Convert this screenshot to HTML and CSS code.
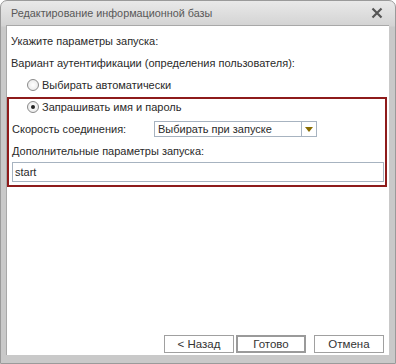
FILE: index.html
```html
<!DOCTYPE html>
<html lang="ru">
<head>
  <meta charset="UTF-8" />
  <title>Редактирование информационной базы</title>
  <link rel="stylesheet" href="styles.css">
</head>
<body>
  <div class="window">
    <div class="titlebar">
      <span class="title">Редактирование информационной базы</span>
      <svg class="close" width="12" height="12" viewBox="0 0 12 12">
        <path d="M1.5 1.5 L10.5 10.5 M10.5 1.5 L1.5 10.5" stroke="#555" stroke-width="2.2" fill="none"/>
      </svg>
    </div>

    <div class="client">
      <div class="form">
        <p class="line">Укажите параметры запуска:</p>
        <p class="line">Вариант аутентификации (определения пользователя):</p>
        <label class="radio"><span class="circle"></span>Выбирать автоматически</label>

        <div class="group">
          <label class="radio"><span class="circle checked"></span>Запрашивать имя и пароль</label>
          <div class="field-row">
            <span class="field-label">Скорость соединения:</span>
            <div class="select">
              <span class="select-value">Выбирать при запуске</span>
              <span class="select-btn"><span class="arrow"></span></span>
            </div>
          </div>
          <p class="line">Дополнительные параметры запуска:</p>
          <div class="input">start</div>
        </div>
      </div>

      <div class="buttons">
        <button class="btn">&lt; Назад</button>
        <button class="btn default">Готово</button>
        <button class="btn cancel">Отмена</button>
      </div>
    </div>
  </div>
</body>
</html>
```

FILE: styles.css
```css
:root {
  --frame: #c9c9c9;
  --frame-dark: #8c8c8c;
  --text: #2a2a2a;
  --accent: #8e1b1b;
  --field-border: #a7b3c0;
}
body {
  margin: 0;
  font-family: 'Liberation Sans', Arial, sans-serif;
  font-size: 11px;
  color: var(--text);
  background: #fff;
}
.window {
  width: 396px;
  height: 364px;
  box-sizing: border-box;
  display: flex;
  flex-direction: column;
  background: linear-gradient(#e9e9e9, #d3d3d3 25px, var(--frame) 26px);
  border: 1px solid #9a9a9a;
  border-radius: 7px 7px 0 0;
  padding: 0 6px 8px 5px;
}
.titlebar {
  height: 24px;
  display: flex;
  align-items: center;
  justify-content: space-between;
  padding: 0 6px 0 5px;
}
.title {
  color: #585858;
  font-size: 10.8px;
}
.close { display: block; }
.client {
  flex: 1;
  display: flex;
  flex-direction: column;
  justify-content: space-between;
  background: #fff;
  border: 1px solid #a8a8a8;
  border-width: 1px 0 0 1px;
}
.form { padding-top: 7px; }
.line {
  margin: 0 0 6px;
  padding-left: 4px;
  line-height: 16px;
}
.radio {
  display: flex;
  align-items: center;
  height: 16px;
  padding-left: 20px;
  margin-bottom: 4px;
}
.circle {
  width: 10px;
  height: 10px;
  border: 1px solid #8a8a8a;
  border-radius: 50%;
  background: radial-gradient(#fff, #e4e4e4);
  margin-right: 3px;
  display: flex;
  align-items: center;
  justify-content: center;
}
.circle.checked::after {
  content: "";
  width: 4px;
  height: 4px;
  border-radius: 50%;
  background: #222;
}
.group {
  border: 2px solid var(--accent);
  margin: 0 2px 0 0;
  padding: 0 1px 3px 3px;
}
.group .radio {
  padding-left: 15px;
  margin-bottom: 6px;
}
.group .line {
  padding-left: 0;
  margin-bottom: 3px;
}
.field-row {
  display: flex;
  align-items: center;
  height: 16px;
  margin-bottom: 6px;
}
.field-label { width: 142px; }
.select {
  display: flex;
  width: 163px;
  height: 16px;
  box-sizing: border-box;
  border: 1px solid var(--field-border);
}
.select-value {
  flex: 1;
  padding-left: 3px;
  line-height: 14px;
}
.select-btn {
  width: 14px;
  border-left: 1px solid var(--field-border);
  display: flex;
  align-items: center;
  justify-content: center;
}
.arrow {
  width: 0;
  height: 0;
  border-left: 4px solid transparent;
  border-right: 4px solid transparent;
  border-top: 5px solid #8a6d00;
}
.input {
  height: 20px;
  box-sizing: border-box;
  border: 1px solid var(--field-border);
  padding-left: 2px;
  line-height: 18px;
}
.buttons {
  display: flex;
  justify-content: flex-end;
  padding: 0 5px 2px 0;
}
.btn {
  font-family: inherit;
  font-size: 11.5px;
  color: #333;
  width: 70px;
  height: 18px;
  padding: 0;
  background: #fff;
  border: 1px solid #a0a0a0;
  margin-left: 2px;
}
.btn.default { border: 2px solid #9a9a9a; }
.btn.cancel { margin-left: 8px; }
```
